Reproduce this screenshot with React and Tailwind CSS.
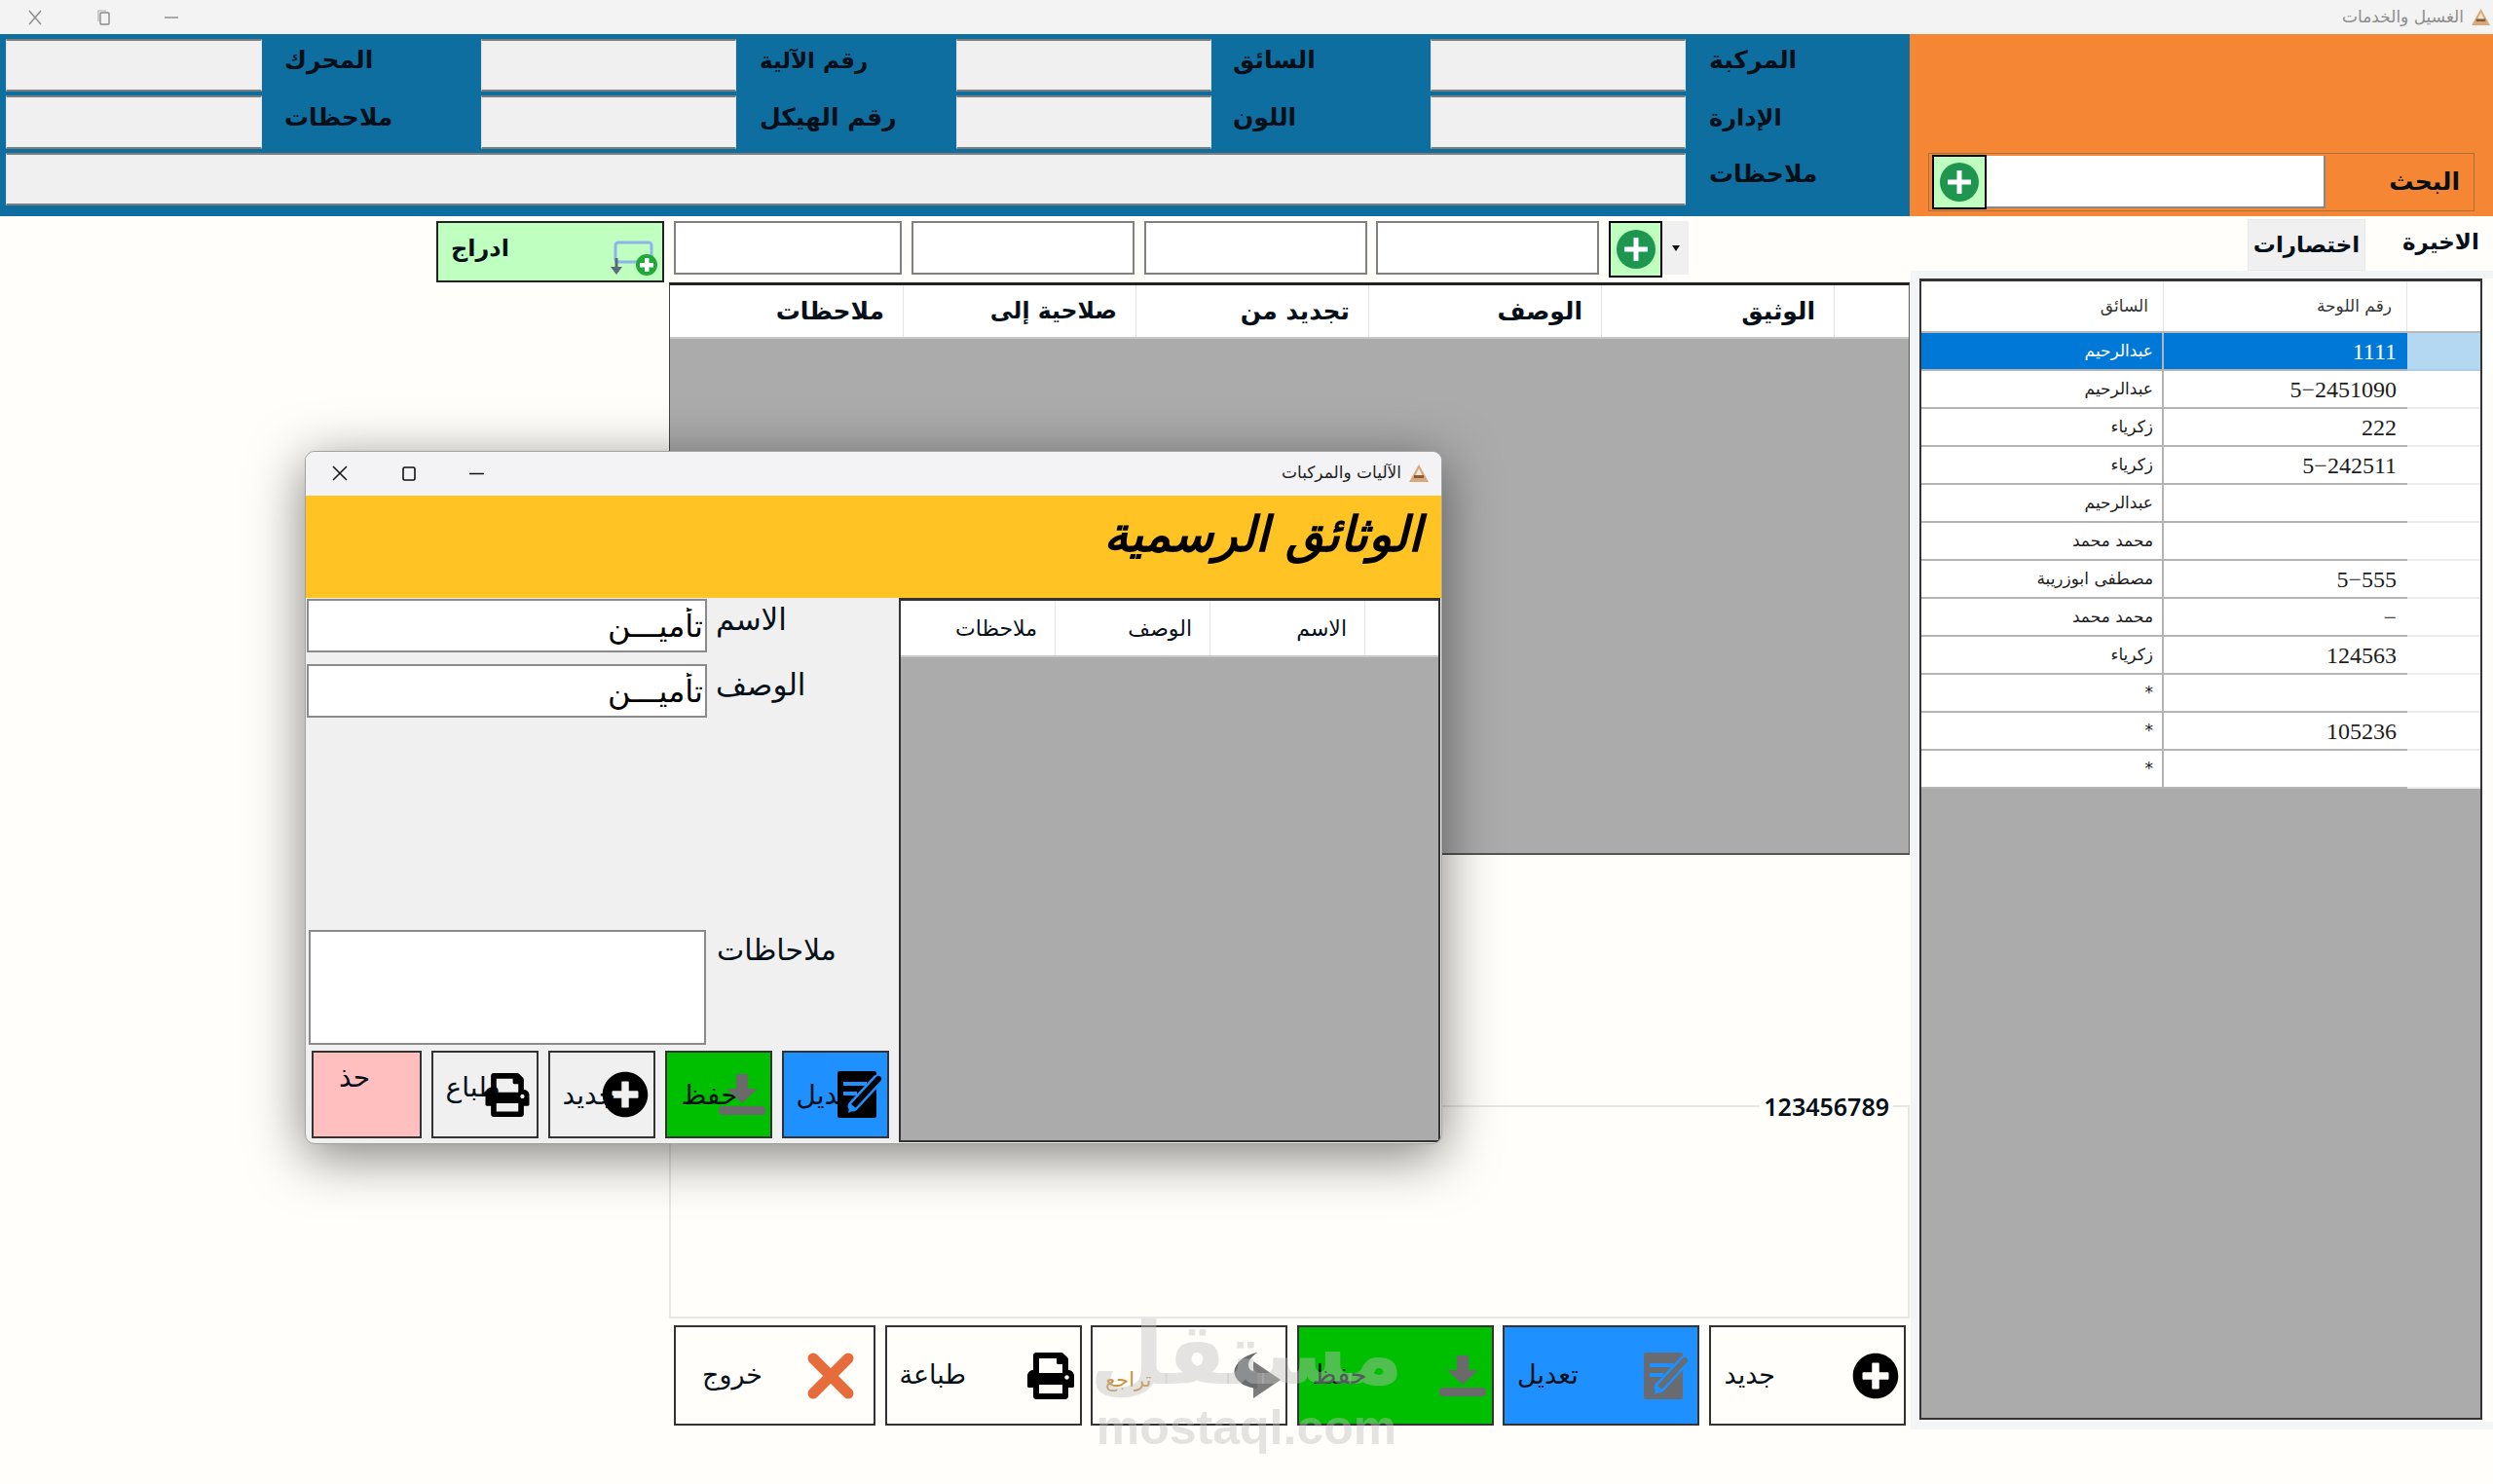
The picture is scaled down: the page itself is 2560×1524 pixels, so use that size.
import React from "react";
import { FaPrint, FaPlusCircle } from "react-icons/fa";

const Field = ({ className = "" }) => (
  <input readOnly dir="rtl" className={`block h-full w-full bg-[#f0f0f0] border-y-2 border-x border-t-[#7d7d7d] border-b-[#7d7d7d] border-x-[#e2e2e2] outline-none ${className}`} />
);

const Lbl = ({ children, className = "" }) => (
  <div className={`pb-[10px] flex items-center text-[25px] font-bold text-[#071018] ${className}`}><span dir="rtl">{children}</span></div>
);

const GreenPlus = ({ className = "" }) => (
  <button className={`flex shrink-0 items-center justify-center bg-[#bfffbf] border-2 border-black ${className}`}>
    <svg width="40" height="40" viewBox="0 0 40 40">
      <circle cx="20" cy="20" r="20" fill="#1f9650" />
      <rect x="17.5" y="8" width="5" height="24" fill="#fff" />
      <rect x="8" y="17.5" width="24" height="5" fill="#fff" />
    </svg>
  </button>
);

const WhiteInput = ({ className = "" }) => (
  <input readOnly className={`block bg-white border-2 border-[#808080] outline-none ${className}`} />
);

const TriLogo = ({ className = "" }) => (
  <svg className={className} viewBox="0 0 20 18">
    <path d="M10 0 L20 18 L0 18 Z" fill="#d8a878" />
    <path d="M10 4 L15 14 L5 14 Z" fill="#f4e6d4" />
    <rect x="5" y="11" width="10" height="3" fill="#8a5a3a" />
  </svg>
);

const EditIcon = ({ fill, cut, className = "" }) => (
  <svg className={className} viewBox="0 0 47 48">
    <rect x="0" y="0" width="40" height="48" rx="2" fill={fill} />
    <path d="M6 13 H30 M6 23 H20" stroke={cut} strokeWidth="4" fill="none" />
    <path d="M16 36 L41 9" stroke={cut} strokeWidth="11" strokeLinecap="round" fill="none" />
    <path d="M17 35 L42 8" stroke={fill} strokeWidth="6" strokeLinecap="round" fill="none" />
    <path d="M11 43 L13 33 L20 39 Z" fill={cut} />
  </svg>
);

const SaveIcon = ({ className = "" }) => (
  <svg className={className} viewBox="0 0 48 42">
    <rect x="18" y="0" width="12" height="16" fill="#6a6a6a" />
    <path d="M8 15 H40 L24 30 Z" fill="#6a6a6a" />
    <rect x="0" y="33" width="48" height="9" rx="4" fill="#6a6a6a" />
  </svg>
);

const RedoIcon = ({ className = "" }) => (
  <svg className={className} viewBox="0 0 48 47">
    <path d="M20 9 L48 28 L20 47 Z" fill="#7b7b7b" />
    <path d="M24 0 C8 3 -2 14 1 23 C4 32 14 36 24 37 L24 20 C14 20 10 10 24 0 Z" fill="#686b6e" />
  </svg>
);

const ExitIcon = ({ className = "" }) => (
  <svg className={className} viewBox="0 0 48 48">
    <path d="M6 6 L42 42 M42 6 L6 42" stroke="#e66c3b" strokeWidth="11" strokeLinecap="round" fill="none" />
  </svg>
);

const InsertIcon = ({ className = "" }) => (
  <svg className={className} viewBox="0 0 50 40">
    <rect x="5" y="4" width="37" height="20" rx="3" fill="none" stroke="#8eb4ee" strokeWidth="3" />
    <path d="M6 20 V30" stroke="#5a6b7c" strokeWidth="3" />
    <path d="M0 29 H12 L6 37 Z" fill="#5a6b7c" />
    <circle cx="37" cy="27" r="11" fill="#20a838" />
    <rect x="35" y="20" width="4.5" height="14" fill="#fff" />
    <rect x="30" y="25" width="14" height="4.5" fill="#fff" />
  </svg>
);

const BigBtn = ({ className = "", text, textClass = "", icon }) => (
  <button className={`flex h-[103px] items-center justify-between border-2 border-[#333] ${className}`}>
    <span dir="rtl" className={`text-[27px] ${textClass}`}>{text}</span>
    {icon}
  </button>
);

const SmallBtn = ({ className = "", text, textClass = "", icon }) => (
  <button className={`relative flex h-[90px] w-[110.5px] items-start border-2 border-[#333] ${className}`}>
    <span dir="rtl" className={`block whitespace-nowrap text-[28px] leading-[36px] ${textClass}`}>{text}</span>
    {icon}
  </button>
);

const mainCols = [
  ["ملاحظات", "text-[25px]"],
  ["صلاحية إلى", "text-[23.5px]"],
  ["تجديد من", "text-[25px]"],
  ["الوصف", "text-[25px]"],
  ["الوثيق", "text-[25px]"],
];
const dlgCols = ["ملاحظات", "الوصف", "الاسم"];

const rows = [
  ["عبدالرحيم", "1111"],
  ["عبدالرحيم", "5−2451090"],
  ["زكرياء", "222"],
  ["زكرياء", "5−242511"],
  ["عبدالرحيم", ""],
  ["محمد محمد", ""],
  ["مصطفى ابوزريبة", "5−555"],
  ["محمد محمد", "−"],
  ["زكرياء", "124563"],
  ["*", ""],
  ["*", "105236"],
  ["*", ""],
];

export default function App() {
  return (
    <div className="relative h-[1524px] w-[2560px] overflow-hidden bg-[#fffefa] font-['DejaVu_Sans',sans-serif] text-[#071018]">
      {/* title bar */}
      <div className="flex h-[35px] items-center justify-between bg-[#f3f3f3] text-[#8a8a8a]">
        <div className="flex items-center pl-[29px]">
          <svg width="14" height="16" viewBox="0 0 14 16"><path d="M1 1 L13 15 M13 1 L1 15" stroke="#8a8a8a" strokeWidth="1.4" /></svg>
          <svg className="ml-[57px]" width="14" height="16" viewBox="0 0 14 16"><rect x="3" y="3" width="9" height="12" rx="1" fill="none" stroke="#8a8a8a" strokeWidth="1.4" /><path d="M1 12 V1 H9" fill="none" stroke="#b0b0b0" strokeWidth="1.2" /></svg>
          <svg className="ml-[55px]" width="14" height="4" viewBox="0 0 14 4"><path d="M0 2 H14" stroke="#8a8a8a" strokeWidth="1.4" /></svg>
        </div>
        <div className="flex items-center pr-[3px]">
          <span dir="rtl" className="text-[17px] text-[#8d8d8d]">الغسيل والخدمات</span>
          <TriLogo className="ml-[8px] h-[17px] w-[19px]" />
        </div>
      </div>

      {/* top band */}
      <div className="flex h-[187px]">
        <div className="w-[1961px] bg-[#0e6e9f] pl-[6px] pt-[5px]">
          <div className="grid grid-cols-[263px_225px_262px_226px_262px_225px_262px_230px] grid-rows-[54px_55px_54px] gap-y-[4px]">
            <Field /><Lbl className="pl-[23px]">المحرك</Lbl>
            <Field /><Lbl className="pl-[24px] !text-[23px]">رقم الآلية</Lbl>
            <Field /><Lbl className="pl-[22px]">السائق</Lbl>
            <Field /><Lbl className="pl-[24px]">المركبة</Lbl>
            <Field /><Lbl className="pl-[23px]">ملاحظات</Lbl>
            <Field /><Lbl className="pl-[24px]">رقم الهيكل</Lbl>
            <Field /><Lbl className="pl-[22px]">اللون</Lbl>
            <Field /><Lbl className="pl-[24px] !text-[24px]">الإدارة</Lbl>
            <Field className="col-span-7" /><Lbl className="pl-[24px]">ملاحظات</Lbl>
          </div>
        </div>
        <div className="flex flex-1 items-end bg-[#f58634] pb-[5px] pl-[19px] pr-[19px]">
          <div className="flex h-[60px] w-full items-center border border-[#a5713f] pl-[3px]">
            <GreenPlus className="h-[56px] w-[56px]" />
            <input readOnly className="h-[54px] w-[348px] border-b-2 border-r-2 border-[#888] bg-white outline-none" />
            <div className="flex-1 pr-[14px] text-right text-[25px] font-bold"><span dir="rtl">البحث</span></div>
          </div>
        </div>
      </div>

      {/* body */}
      <div className="flex">
        <div className="w-[1961px] shrink-0">
          {/* toolbar */}
          <div className="flex h-[68px] items-start pl-[448px] pt-[5px]">
            <button className="flex h-[63px] w-[234px] items-center justify-between border-2 border-[#222] bg-[#bfffbf] pl-[13px] pr-[3px]">
              <span dir="rtl" className="mb-[8px] text-[24px] font-bold">ادراج</span>
              <InsertIcon className="mt-[12px] h-[40px] w-[50px]" />
            </button>
            <WhiteInput className="ml-[10px] h-[55px] w-[234px]" />
            <WhiteInput className="ml-[10px] h-[55px] w-[229px]" />
            <WhiteInput className="ml-[10px] h-[55px] w-[229px]" />
            <WhiteInput className="ml-[9px] h-[55px] w-[229px]" />
            <GreenPlus className="ml-[10px] h-[58px] w-[55px]" />
            <div className="flex h-[55px] w-[27px] items-center justify-center bg-[#f0f0f0]">
              <svg width="8" height="6" viewBox="0 0 8 6"><path d="M0 0 H8 L4 6 Z" fill="#111" /></svg>
            </div>
          </div>

          {/* documents grid */}
          <div className="ml-[687px] flex h-[588px] flex-col border-l border-r border-b-2 border-t-[3px] border-l-[#444] border-r-[#555] border-b-[#555] border-t-[#222] bg-[#ababab]">
            <div className="flex h-[55px] shrink-0 border-b-2 border-[#c8c8c8] bg-white">
              {mainCols.map(([c, size]) => (
                <div key={c} className={`flex w-[239px] items-center justify-end border-r border-[#e4e4e4] pr-[19px] font-bold first:w-[240px] ${size}`}>
                  <span dir="rtl">{c}</span>
                </div>
              ))}
              <div className="flex-1" />
            </div>
          </div>

          {/* group box */}
          <fieldset className="ml-[687px] mt-[239px] h-[237px] border-2 border-[#e7e7e3]">
            <legend className="ml-auto mr-[15px] px-[4px] font-['Noto_Sans',sans-serif] text-[25px] leading-[38px] font-semibold">123456789</legend>
          </fieldset>

          {/* action buttons */}
          <div className="flex gap-[9.5px] pl-[692px] pt-[7px]">
            <BigBtn className="w-[207px] pl-[27px] pr-[20px]" text="خروج" icon={<ExitIcon className="h-[48px] w-[48px]" />} />
            <BigBtn className="w-[202px] pl-[13px] pr-[5px]" text="طباعة" icon={<FaPrint className="h-[48px] w-[50px] text-black" />} />
            <BigBtn className="w-[202px] pl-[13px] pr-[5px]" text="تراجع" textClass="!text-[21px] text-[#c8923a] mt-[10px]" icon={<RedoIcon className="h-[47px] w-[48px]" />} />
            <BigBtn className="w-[202px] border-[#222] bg-[#00bf00] pl-[14px] pr-[6px]" text="حفظ" icon={<SaveIcon className="h-[42px] w-[48px]" />} />
            <BigBtn className="w-[202px] bg-[#1e90ff] pl-[13px] pr-[8px]" text="تعديل" icon={<EditIcon fill="#686c70" cut="#1e90ff" className="h-[48px] w-[47px]" />} />
            <BigBtn className="w-[202px] pl-[14px] pr-[5px]" text="جديد" icon={<FaPlusCircle className="h-[48px] w-[48px] text-black" />} />
          </div>
        </div>

        {/* right panel */}
        <div className="flex-1">
          <div className="flex h-[56px] items-end pl-[347px]">
            <div className="flex h-[53px] w-[121px] items-center justify-center border border-[#e8e8e8] bg-[#f0f0f0] text-[23px] font-bold"><span dir="rtl">اختصارات</span></div>
            <div className="flex h-[56px] flex-1 items-center pb-[4px] pl-[38px] text-[23px] font-bold"><span dir="rtl">الاخيرة</span></div>
          </div>
          <div className="ml-px h-[1190px] border-y-[8px] border-l-[9px] border-[#f3f4f6] pr-[11px]">
            <div className="flex h-[1172px] flex-col border-x-2 border-b-2 border-t-[3px] border-[#333] bg-[#ababab]">
              <div className="flex h-[53px] shrink-0 border-b-2 border-[#b8b8b8] bg-white text-[17px] text-[#333]">
                <div className="flex w-[249px] items-center justify-end border-r border-[#e4e4e4] pr-[15px]"><span dir="rtl">السائق</span></div>
                <div className="flex w-[250px] items-center justify-end border-r border-[#e4e4e4] pr-[15px]"><span dir="rtl">رقم اللوحة</span></div>
                <div className="flex-1" />
              </div>
              {rows.map(([d, n], i) => (
                <div key={i} className={`flex h-[39px] shrink-0 ${i === 0 ? "bg-[#0078d7] text-white" : "bg-white text-[#1c1c1c]"}`}>
                  <div className="flex w-[249px] items-center justify-end border-b-2 border-r-2 border-[#b4b4b4] pr-[9px] text-[17px]"><span dir="rtl">{d}</span></div>
                  <div className="flex w-[250px] items-center justify-end border-b-2 border-[#b4b4b4] pr-[11px] font-['Liberation_Serif',serif] text-[24px]">{n}</div>
                  <div className={`flex-1 border-b-2 ${i === 0 ? "border-[#a9d0ee] bg-[#b4d8f1]" : "border-[#ececec] bg-white"}`} />
                </div>
              ))}
            </div>
          </div>
        </div>
      </div>

      {/* floating dialog window */}
      <div className="absolute left-[313px] top-[463px] flex h-[712px] w-[1168px] flex-col overflow-hidden rounded-[10px] border border-[#a0a0a0] bg-[#f0f0f0] shadow-[0_12px_55px_rgba(0,0,0,0.5)]">
        <div className="flex h-[45px] shrink-0 items-center justify-between bg-[#f3f3f5] pb-[1px]">
          <div className="flex items-center pl-[27px]">
            <svg width="16" height="16" viewBox="0 0 16 16"><path d="M1 1 L15 15 M15 1 L1 15" stroke="#111" strokeWidth="1.5" /></svg>
            <svg className="ml-[56px]" width="14" height="15" viewBox="0 0 14 15"><rect x="1" y="1" width="12" height="13" rx="1.5" fill="none" stroke="#111" strokeWidth="1.6" /></svg>
            <svg className="ml-[55px]" width="15" height="3" viewBox="0 0 15 3"><path d="M0 1.5 H15" stroke="#111" strokeWidth="1.5" /></svg>
          </div>
          <div className="flex items-center pr-[13px]">
            <span dir="rtl" className="text-[17px] text-[#222]">الآليات والمركبات</span>
            <TriLogo className="ml-[8px] h-[18px] w-[20px]" />
          </div>
        </div>
        <div className="flex h-[105px] shrink-0 items-center justify-end bg-[#ffc423] pb-[25px] pr-[20px]">
          <span dir="rtl" className="text-[50px] font-bold italic leading-[60px] text-black">الوثائق الرسمية</span>
        </div>
        <div className="flex flex-1">
          {/* form side */}
          <div className="flex w-[609px] shrink-0 flex-col pl-[1px] pt-[1px]">
            <div className="flex h-[55px] items-start">
              <input readOnly dir="rtl" value="تأميـــن" className="h-[55px] w-[411px] border-2 border-[#8a8a8a] bg-white pr-[2px] text-[32px] text-black outline-none" />
              <span dir="rtl" className="ml-[9px] mt-[2px] text-[31px] leading-[38px]">الاسم</span>
            </div>
            <div className="mt-[12px] flex h-[55px] items-start">
              <input readOnly dir="rtl" value="تأميـــن" className="h-[55px] w-[411px] border-2 border-[#8a8a8a] bg-white pr-[2px] text-[32px] text-black outline-none" />
              <span dir="rtl" className="ml-[9px] mt-[2px] text-[31px] leading-[38px]">الوصف</span>
            </div>
            <div className="mt-[218px] flex h-[118px] items-start pl-[2px]">
              <textarea readOnly className="h-[118px] w-[408px] resize-none border-2 border-[#8a8a8a] bg-white outline-none" />
              <span dir="rtl" className="ml-[11px] mt-[2px] text-[30px] leading-[38px]">ملاحاظات</span>
            </div>
            <div className="mt-[6px] flex gap-[9.5px] pl-[5px]">
              <SmallBtn className="!w-[113px] bg-[#ffbfbf] pl-[26px]" text="حذ" textClass="pt-[8px]" />
              <SmallBtn className="pl-[13px]" text="طباع" textClass="pt-[18px]" icon={<FaPrint className="absolute right-[5px] top-[21px] h-[45px] w-[50px] text-black" />} />
              <SmallBtn className="pl-[13px]" text="جديد" textClass="pt-[26px]" icon={<FaPlusCircle className="absolute right-[5px] top-[19px] h-[48px] w-[48px] text-black" />} />
              <SmallBtn className="bg-[#00bf00] pl-[15px]" text="حفظ" textClass="pt-[26px]" icon={<SaveIcon className="absolute right-[5px] top-[22px] h-[42px] w-[48px]" />} />
              <SmallBtn className="bg-[#1e90ff] pl-[13px]" text="تعديل" textClass="pt-[26px]" icon={<EditIcon fill="#000" cut="#1e90ff" className="absolute right-[4px] top-[19px] h-[48px] w-[47px]" />} />
            </div>
          </div>
          {/* dialog grid */}
          <div className="mr-[1px] flex h-[559px] flex-1 flex-col border-x-2 border-b-2 border-t-[3px] border-[#333] bg-[#ababab]">
            <div className="flex h-[58px] shrink-0 border-b-2 border-[#c8c8c8] bg-white text-[22px]">
              {dlgCols.map((c) => (
                <div key={c} className="flex w-[159px] items-center justify-end border-r border-[#e4e4e4] pr-[18px]"><span dir="rtl">{c}</span></div>
              ))}
              <div className="flex-1" />
            </div>
          </div>
        </div>
      </div>

      {/* watermark */}
      <div className="pointer-events-none absolute left-[1120px] top-[1342px] flex w-[320px] flex-col items-center text-[#bebebe]/[.42]">
        <span dir="rtl" className="text-[88px] leading-[98px] font-bold">مستقل</span>
        <span className="font-['Liberation_Sans',sans-serif] text-[50px] leading-[52px] font-bold">mostaql.com</span>
      </div>
    </div>
  );
}
